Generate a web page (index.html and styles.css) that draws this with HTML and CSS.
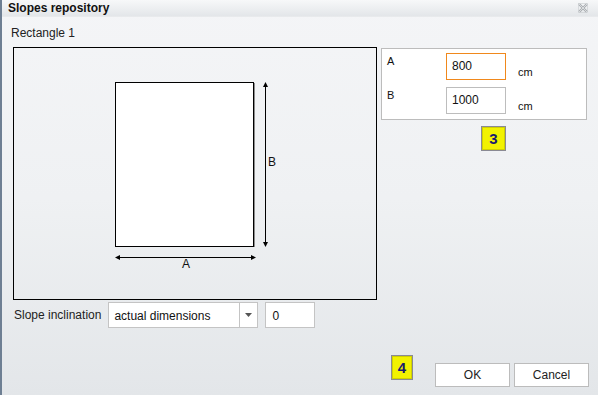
FILE: index.html
```html
<!DOCTYPE html>
<html>
<head>
<meta charset="utf-8">
<link rel="stylesheet" href="styles.css">
</head>
<body>
<div class="dialog">
  <div class="titlebar">
    <span class="title">Slopes repository</span>
    <svg class="close" width="10" height="10" viewBox="0 0 10 10">
      <path d="M1 1 L9 9 M9 1 L1 9" stroke="#a9adb1" stroke-width="2.4" fill="none"/>
      <path d="M1 1 L9 9 M9 1 L1 9" stroke="#e6e8ea" stroke-width="0.8" fill="none"/>
      <rect x="0.5" y="0.5" width="9" height="9" fill="none" stroke="#c9cccf" stroke-width="0.6"/>
    </svg>
  </div>
  <div class="content">
    <div class="heading">Rectangle 1</div>
    <div class="main">
      <div class="canvas">
        <svg width="362" height="251" viewBox="0 0 362 251">
          <rect x="101.5" y="34.5" width="138" height="164" fill="#fff" stroke="#000" stroke-width="1"/>
          <line x1="240.5" y1="35" x2="240.5" y2="199" stroke="#8c8c8c" stroke-width="1"/>
          <line x1="251.5" y1="37" x2="251.5" y2="196" stroke="#000" stroke-width="1"/>
          <path d="M251.5 34 L249 39 L254 39 Z" fill="#000"/>
          <path d="M251.5 199 L249 194 L254 194 Z" fill="#000"/>
          <line x1="104" y1="209.5" x2="239" y2="209.5" stroke="#000" stroke-width="1"/>
          <path d="M101 209.5 L106 207 L106 212 Z" fill="#000"/>
          <path d="M242 209.5 L237 207 L237 212 Z" fill="#000"/>
          <text x="254" y="118" class="lbl">B</text>
          <text x="168" y="220" class="lbl">A</text>
        </svg>
      </div>
      <div class="side">
        <div class="dims">
          <div class="dimrow">
            <span class="dlabel">A</span>
            <span class="field active">800</span>
            <span class="unit">cm</span>
          </div>
          <div class="dimrow">
            <span class="dlabel">B</span>
            <span class="field">1000</span>
            <span class="unit">cm</span>
          </div>
        </div>
        <div class="badge badge3">3</div>
      </div>
    </div>
    <div class="slope">
      <span class="slabel">Slope inclination</span>
      <div class="select">
        <span class="sval">actual dimensions</span>
        <span class="trigger"><svg width="7" height="4" viewBox="0 0 7 4"><path d="M0 0 L7 0 L3.5 4 Z" fill="#555"/></svg></span>
      </div>
      <span class="num">0</span>
    </div>
    <div class="footer">
      <div class="badge badge4">4</div>
      <div class="btn ok">OK</div>
      <div class="btn cancel">Cancel</div>
    </div>
  </div>
</div>
</body>
</html>
```
FILE: styles.css
```css
* { box-sizing: border-box; }
html, body { margin: 0; padding: 0; }
body {
  width: 598px;
  height: 395px;
  overflow: hidden;
  font-family: "Liberation Sans", Arial, sans-serif;
  font-size: 12px;
  color: #111;
}
.dialog {
  width: 598px;
  height: 395px;
  border-left: 2px solid #6e7f93;
  background: linear-gradient(#f4f5f7 0%, #eff1f3 50%, #e3e6e9 100%);
  display: flex;
  flex-direction: column;
}
.titlebar {
  height: 17px;
  background: linear-gradient(#f7f8f9, #e3e6e9);
  border-bottom: 1px solid #e8eaec;
  display: flex;
  align-items: center;
  justify-content: space-between;
  padding: 0 10px 0 6px;
}
.title {
  font-weight: bold;
  font-size: 12px;
  color: #111;
  line-height: 14px;
  margin-top: -1px;
}
.close { display: block; margin-top: -1px; }
.content {
  padding: 0 0 0 9px;
  flex: 1;
  display: flex;
  flex-direction: column;
}
.heading {
  margin-top: 9px;
  line-height: 14px;
  color: #222;
}
.main {
  display: flex;
  margin-top: 7px;
  margin-left: 2px;
}
.canvas {
  width: 364px;
  height: 253px;
  border: 1px solid #000;
}
.canvas svg { display: block; }
.lbl {
  font-family: "Liberation Sans", Arial, sans-serif;
  font-size: 12px;
  fill: #111;
}
.side {
  margin-left: 4px;
  margin-top: 1px;
  display: flex;
  flex-direction: column;
}
.dims {
  width: 206px;
  height: 72px;
  background: #fff;
  border: 1px solid #bcbcbc;
  padding: 4px 0 0 5px;
  display: flex;
  flex-direction: column;
  gap: 7px;
}
.dimrow {
  display: flex;
  align-items: flex-start;
  height: 27px;
}
.dlabel {
  width: 59px;
  font-size: 11px;
  line-height: 13px;
  margin-top: 2px;
}
.field {
  width: 60px;
  height: 27px;
  border: 1px solid #bdbdbd;
  padding: 5px 0 0 5px;
  font-size: 12px;
  line-height: 14px;
}
.field.active { border-color: #f0881c; }
.unit {
  margin-left: 12px;
  margin-top: 13px;
  font-size: 11px;
  line-height: 13px;
}
.badge {
  background: #f2f200;
  border: 1px solid #8a8a94;
  box-shadow: inset 0 0 0 1px #d0d000;
  font-weight: bold;
  font-size: 15px;
  color: #1a1a6e;
  display: flex;
  align-items: center;
  justify-content: center;
}
.badge3 {
  width: 25px;
  height: 25px;
  margin-top: 6px;
  margin-left: 100px;
}
.slope {
  display: flex;
  align-items: center;
  margin-top: 2px;
  margin-left: 3px;
  height: 26px;
}
.slabel { color: #222; }
.select {
  margin-left: 7px;
  width: 150px;
  height: 26px;
  background: #fff;
  border: 1px solid #c4c4c4;
  display: flex;
  align-items: stretch;
}
.sval {
  flex: 1;
  padding: 6px 0 0 5px;
  line-height: 14px;
}
.trigger {
  width: 18px;
  border-left: 1px solid #c4c4c4;
  display: flex;
  align-items: center;
  justify-content: center;
}
.trigger svg { display: block; }
.num {
  margin-left: 7px;
  width: 50px;
  height: 26px;
  background: #fff;
  border: 1px solid #c4c4c4;
  padding: 6px 0 0 6px;
  line-height: 14px;
}
.footer {
  display: flex;
  align-items: flex-start;
  margin-top: 27px;
  margin-left: 380px;
}
.badge4 {
  width: 22px;
  height: 25px;
}
.btn {
  height: 24px;
  width: 75px;
  background: #fff;
  border: 1px solid #bcbcbc;
  display: flex;
  align-items: center;
  justify-content: center;
  margin-top: 8px;
  color: #222;
}
.ok { margin-left: 22px; }
.cancel { margin-left: 4px; }
```
